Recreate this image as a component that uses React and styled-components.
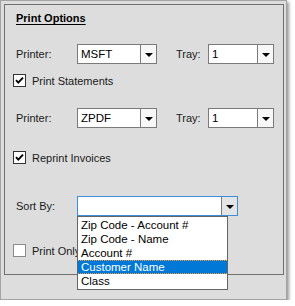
import React from 'react';
import styled, { createGlobalStyle } from 'styled-components';

const Global = createGlobalStyle`
  body {
    margin: 0;
    background: #ffffff;
    font-family: "Liberation Sans", Arial, sans-serif;
    font-size: 11px;
    color: #111;
  }
`;

// outer window with the drop shadow
const Frame = styled.div`
  width: 287px;
  height: 300px;
  box-sizing: border-box;
  background: #dddddd;
  border: 1px solid #a3a3a3;
  padding: 3px 2px 0 3px;
  box-shadow: 2px 2px 3px rgba(0, 0, 0, 0.4);
`;

const Group = styled.div`
  width: 280px;
  height: 271px;
  box-sizing: border-box;
  border: 1px solid #707070;
  padding: 0 0 0 8px;
  display: flex;
  flex-direction: column;
`;

const Title = styled.div`
  margin-top: 6px;
  margin-left: 3px;
  font-weight: bold;
  font-size: 11px;
  line-height: 14px;
  text-decoration: underline;
  text-underline-offset: 2px;
  color: #000;
`;

const Row = styled.div`
  position: relative;
  display: flex;
  align-items: center;
  height: 20px;
  margin-top: ${p => p.$top}px;
`;

const Label = styled.span`
  width: ${p => p.$w}px;
  padding-left: ${p => p.$pad || 0}px;
  box-sizing: border-box;
  flex: none;
  color: #1a1a1a;
`;

const Combo = styled.div`
  width: ${p => p.$w}px;
  height: 20px;
  box-sizing: border-box;
  flex: none;
  display: flex;
  background: #fff;
  border: 1px solid ${p => (p.$focus ? '#3e8ede' : '#7a7a7a')};
`;

const ComboText = styled.div`
  flex: 1;
  padding-left: 3px;
  font-size: 11.5px;
  line-height: 18px;
  color: #000;
`;

const ComboButton = styled.div`
  width: 15px;
  flex: none;
  border-left: 1px solid #7a7a7a;
  background: ${p => (p.$focus ? '#e4e4e4' : '#f7f7f7')};
  display: flex;
  align-items: center;
  justify-content: center;
`;

const Arrow = styled.span`
  width: 0;
  height: 0;
  border-left: 4px solid transparent;
  border-right: 4px solid transparent;
  border-top: 4px solid #000;
  margin-top: 1px;
`;

const CheckRow = styled.label`
  display: flex;
  align-items: center;
  height: 13px;
  margin-top: ${p => p.$top}px;
`;

const Box = styled.span`
  width: 13px;
  height: 13px;
  box-sizing: border-box;
  flex: none;
  background: #fff;
  border: 1px solid ${p => (p.$checked ? '#333' : '#8a8a8a')};
  display: flex;
  align-items: center;
  justify-content: center;
  margin-right: 6px;
`;

const CheckText = styled.span`
  color: #1a1a1a;
  white-space: nowrap;
`;

const List = styled.ul`
  position: absolute;
  top: 20px;
  left: 64px;
  width: 151px;
  margin: 0;
  padding: 1px 0 1px;
  box-sizing: border-box;
  list-style: none;
  background: #fff;
  border: 1px solid #646464;
  z-index: 2;
`;

const Item = styled.li`
  height: 14px;
  box-sizing: border-box;
  line-height: 13px;
  padding-left: 3px;
  font-size: 11.5px;
  color: ${p => (p.$active ? '#fff' : '#000')};
  background: ${p => (p.$active ? '#0078d7' : 'transparent')};
  border: 1px dotted ${p => (p.$active ? '#f0a040' : 'transparent')};
  border-left: none;
  border-right: none;
  white-space: nowrap;
`;

function Dropdown({ w, value, focus }) {
  return (
    <Combo $w={w} $focus={focus}>
      <ComboText>{value}</ComboText>
      <ComboButton $focus={focus}>
        <Arrow />
      </ComboButton>
    </Combo>
  );
}

function Check({ top, checked, children }) {
  return (
    <CheckRow $top={top}>
      <Box $checked={checked}>
        {checked && (
          <svg width="9" height="9" viewBox="0 0 9 9">
            <path d="M1 4.2 L3.3 6.6 L8 1.6" fill="none" stroke="#000" strokeWidth="1.9" />
          </svg>
        )}
      </Box>
      <CheckText>{children}</CheckText>
    </CheckRow>
  );
}

function PrinterRow({ top, printer }) {
  return (
    <Row $top={top}>
      <Label $w={64} $pad={3}>Printer:</Label>
      <Dropdown w={80} value={printer} />
      <Label $w={51} $pad={19}>Tray:</Label>
      <Dropdown w={66} value="1" />
    </Row>
  );
}

const sortOptions = ['Zip Code - Account #', 'Zip Code - Name', 'Account #', 'Customer Name', 'Class'];

export default function App() {
  return (
    <>
      <Global />
      <Frame>
        <Group>
          <Title>Print Options</Title>
          <PrinterRow top={19} printer="MSFT" />
          <Check top={10} checked>Print Statements</Check>
          <PrinterRow top={21} printer="ZPDF" />
          <Check top={23} checked>Reprint Invoices</Check>
          <Row $top={32}>
            <Label $w={64} $pad={3}>Sort By:</Label>
            <Dropdown w={161} value="" focus />
            <List>
              {sortOptions.map(o => (
                <Item key={o} $active={o === 'Customer Name'}>{o}</Item>
              ))}
            </List>
          </Row>
          <Check top={28}>Print Only</Check>
        </Group>
      </Frame>
    </>
  );
}
